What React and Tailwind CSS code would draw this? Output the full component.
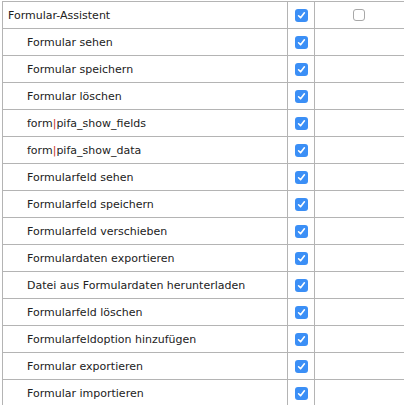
import React from 'react';

const rows = [
    { label: 'Formular-Assistent', top: true },
    { label: 'Formular sehen' },
    { label: 'Formular speichern' },
    { label: 'Formular löschen' },
    { label: ['form', 'pifa_show_fields'] },
    { label: ['form', 'pifa_show_data'] },
    { label: 'Formularfeld sehen' },
    { label: 'Formularfeld speichern' },
    { label: 'Formularfeld verschieben' },
    { label: 'Formulardaten exportieren' },
    { label: 'Datei aus Formulardaten herunterladen' },
    { label: 'Formularfeld löschen' },
    { label: 'Formularfeldoption hinzufügen' },
    { label: 'Formular exportieren' },
    { label: 'Formular importieren' },
];

const Checked = () => (
    <span className="inline-flex w-[13px] h-[13px] rounded-[3px] bg-[#3b8ff6] items-center justify-center">
        <svg width="9" height="9" viewBox="0 0 9 9">
            <path d="M1.6 4.8 L3.6 6.8 L7.4 1.8" fill="none" stroke="#fff" strokeWidth="1.6" strokeLinecap="round" strokeLinejoin="round" />
        </svg>
    </span>
);

const Unchecked = () => (
    <span className="inline-block w-[12px] h-[12px] rounded-[3px] border border-[#a8a8a8] bg-white" />
);

const Label = ({ label }) => {
    if (Array.isArray(label)) {
        return (
            <>
                {label[0]}
                <span className="text-[#c8322a]">|</span>
                {label[1]}
            </>
        );
    }
    return label;
};

export default function App() {
    return (
        <div className="bg-white h-[405px] overflow-hidden pt-px pl-[2px]">
            <table
                className="border-collapse w-[404px] text-[11px] text-[#222] table-fixed"
                style={{ fontFamily: '"DejaVu Sans", Verdana, sans-serif' }}
            >
                <colgroup>
                    <col className="w-[285px]" />
                    <col className="w-[27px]" />
                    <col />
                </colgroup>
                <tbody>
                    {rows.map((row, i) => (
                        <tr key={i} className="h-[27px]">
                            <td className={`border border-[#b4b4b4] p-0 leading-none ${row.top ? 'pl-[5px]' : 'pl-[24px]'}`}>
                                <Label label={row.label} />
                            </td>
                            <td className="border border-[#b4b4b4] p-0 text-center align-middle">
                                <div className="flex justify-center items-center pl-px">
                                    <Checked />
                                </div>
                            </td>
                            <td className="border border-[#b4b4b4] p-0 align-middle">
                                {row.top && (
                                    <div className="flex justify-center items-center pr-[2px]">
                                        <Unchecked />
                                    </div>
                                )}
                            </td>
                        </tr>
                    ))}
                </tbody>
            </table>
        </div>
    );
}
